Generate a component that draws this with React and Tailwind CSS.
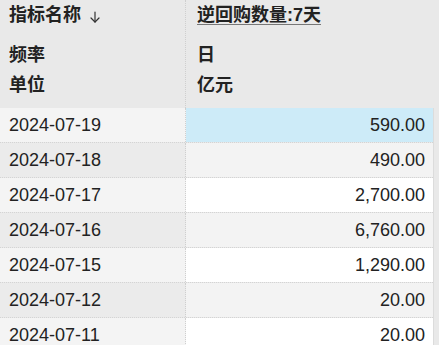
import React from 'react'

const rows = [
    { date: '2024-07-19', value: '590.00' },
    { date: '2024-07-18', value: '490.00' },
    { date: '2024-07-17', value: '2,700.00' },
    { date: '2024-07-16', value: '6,760.00' },
    { date: '2024-07-15', value: '1,290.00' },
    { date: '2024-07-12', value: '20.00' },
    { date: '2024-07-11', value: '20.00' },
]

const font = { fontFamily: '"Liberation Sans", "Noto Sans CJK SC", sans-serif' }

const SortArrow = () => (
    <svg width="10" height="12" viewBox="0 0 10 12" fill="none" stroke="#333" strokeWidth="1.2" strokeLinecap="round" strokeLinejoin="round">
        <path d="M5 1v10" />
        <path d="M1 7l4 4 4-4" />
    </svg>
)

const App = () => {
    return (
        <div className="w-[439px] h-[345px] overflow-hidden bg-[#e9e9e9] text-[#222]" style={font}>
            {/* header */}
            <div className="grid grid-cols-[186px_1fr] h-[108px] bg-[#e9e9e9]">
                <div className="border-r border-dotted border-[#cfcfcf] pl-[9px] font-bold text-[18px]">
                    <div className="h-[30px] leading-[30px] flex items-center gap-[9px]">
                        <span>指标名称</span>
                        <span className="pt-[3px]"><SortArrow /></span>
                    </div>
                    <div className="h-[30px] leading-[30px] mt-[10px]">频率</div>
                    <div className="h-[30px] leading-[30px]">单位</div>
                </div>
                <div className="pl-[11px] font-bold text-[18px]">
                    <div className="h-[30px] leading-[30px]">
                        <span className="underline decoration-[#777] decoration-1 underline-offset-[3px]">逆回购数量:7天</span>
                    </div>
                    <div className="h-[30px] leading-[30px] mt-[10px]">日</div>
                    <div className="h-[30px] leading-[30px]">亿元</div>
                </div>
            </div>

            {/* body */}
            <div className="w-[434px] border-r border-[#dcdcdc]">
                {rows.map((row, i) => (
                    <div key={row.date} className="grid grid-cols-[186px_1fr] h-[35px] border-b border-dotted border-[#d4d4d4]">
                        <div className={`border-r border-dotted border-[#cfcfcf] pl-[9px] flex items-center text-[18px] ${i % 2 === 0 ? 'bg-[#f4f4f4]' : 'bg-[#ebebeb]'}`}>
                            {row.date}
                        </div>
                        <div className={`flex items-center justify-end pr-[8px] text-[18px] ${i === 0 ? 'bg-[#cdebf8]' : i % 2 === 1 ? 'bg-[#f3f3f3]' : 'bg-white'}`}>
                            {row.value}
                        </div>
                    </div>
                ))}
            </div>
        </div>
    )
}

export default App
